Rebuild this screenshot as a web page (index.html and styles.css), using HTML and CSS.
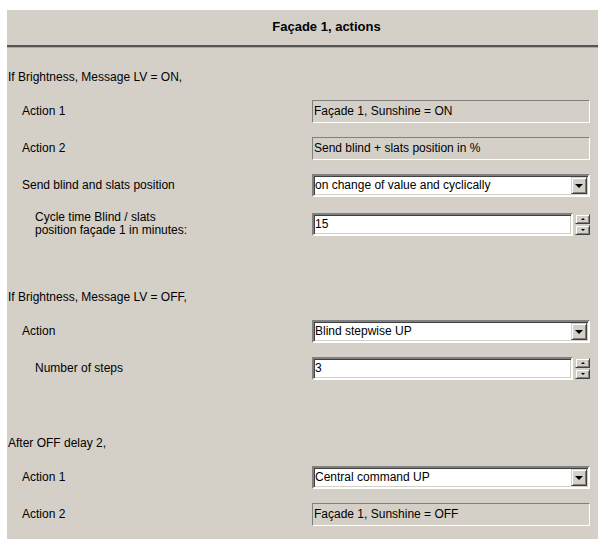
FILE: index.html
```html
<!DOCTYPE html>
<html lang="en">
<head>
<meta charset="utf-8">
<title>Façade 1, actions</title>
<link rel="stylesheet" href="styles.css">
</head>
<body>
<div class="panel">
  <div class="panel-header"><span class="panel-title">Façade 1, actions</span></div>

  <section class="group group-first">
    <div class="group-heading">If Brightness, Message LV = ON,</div>
    <div class="row">
      <div class="label">Action 1</div>
      <div class="field field-readonly">Façade 1, Sunshine = ON</div>
    </div>
    <div class="row">
      <div class="label">Action 2</div>
      <div class="field field-readonly">Send blind + slats position in %</div>
    </div>
    <div class="row">
      <div class="label">Send blind and slats position</div>
      <div class="field field-select">
        <span class="field-text">on change of value and cyclically</span>
        <span class="drop-btn"><span class="arrow-down"></span></span>
      </div>
    </div>
    <div class="row">
      <div class="label label-sub">Cycle time Blind / slats<br>position façade 1 in minutes:</div>
      <div class="spin">
        <div class="field spin-input">15</div>
        <div class="spin-btns">
          <span class="spin-btn"><span class="arrow-up-sm"></span></span>
          <span class="spin-btn"><span class="arrow-down-sm"></span></span>
        </div>
      </div>
    </div>
  </section>

  <section class="group">
    <div class="group-heading">If Brightness, Message LV = OFF,</div>
    <div class="row">
      <div class="label">Action</div>
      <div class="field field-select">
        <span class="field-text">Blind stepwise UP</span>
        <span class="drop-btn"><span class="arrow-down"></span></span>
      </div>
    </div>
    <div class="row">
      <div class="label label-sub">Number of steps</div>
      <div class="spin">
        <div class="field spin-input">3</div>
        <div class="spin-btns">
          <span class="spin-btn"><span class="arrow-up-sm"></span></span>
          <span class="spin-btn"><span class="arrow-down-sm"></span></span>
        </div>
      </div>
    </div>
  </section>

  <section class="group">
    <div class="group-heading">After OFF delay 2,</div>
    <div class="row">
      <div class="label">Action 1</div>
      <div class="field field-select">
        <span class="field-text">Central command UP</span>
        <span class="drop-btn"><span class="arrow-down"></span></span>
      </div>
    </div>
    <div class="row">
      <div class="label">Action 2</div>
      <div class="field field-readonly">Façade 1, Sunshine = OFF</div>
    </div>
  </section>
</div>
</body>
</html>
```

FILE: styles.css
```css
* { box-sizing: border-box; }

html, body {
  margin: 0;
  background: #ffffff;
}

body {
  padding: 10px 0 0 7px;
  font-family: "Liberation Sans", Arial, sans-serif;
  font-size: 12px;
  color: #000;
}

.panel {
  background: #d4d0c8;
  min-height: 529px;
  padding-bottom: 8px;
}

/* title bar with its etched divider */
.panel-header {
  height: 37px;
  display: flex;
  align-items: center;
  justify-content: center;
  padding-left: 48px;
  border-bottom: 2px solid #555555;
  box-shadow: 0 1px 0 #a8a8a8;
}

.panel-title {
  font-weight: bold;
  font-size: 13px;
  padding-bottom: 2px;
}

.group {
  display: flex;
  flex-direction: column;
  gap: 14px;
  margin-top: 56px;
}

.group-first { margin-top: 23px; }

.group-heading {
  height: 14px;
  line-height: 14px;
  padding-left: 1px;
  margin-bottom: 2px;
}

.row {
  display: grid;
  grid-template-columns: 1fr 278px;
  align-items: center;
  height: 23px;
  padding-right: 8px;
}

.label {
  padding-left: 15px;
  line-height: 13px;
}

.label-sub { padding-left: 28px; }

/* classic sunken edit border */
.field {
  height: 23px;
  border: 2px solid;
  border-color: #808080 #ffffff #ffffff #808080;
  box-shadow: inset 1px 1px 0 #404040, inset -1px -1px 0 #d4d0c8;
  background: #fff;
  padding-left: 1px;
  line-height: 19px;
  white-space: nowrap;
  overflow: hidden;
}

.field-readonly {
  background: #d4d0c8;
  border-width: 1px;
  box-shadow: none;
  line-height: 20px;
  padding-left: 1px;
}

.field-select {
  display: flex;
  align-items: center;
  padding-right: 1px;
}

.field-text { flex: 1; }

/* raised push buttons */
.drop-btn,
.spin-btn {
  display: flex;
  align-items: center;
  justify-content: center;
  background: #d4d0c8;
  border: 1px solid;
  border-color: #d4d0c8 #404040 #404040 #d4d0c8;
  box-shadow: inset 1px 1px 0 #ffffff, inset -1px -1px 0 #808080;
}

.drop-btn {
  width: 16px;
  height: 17px;
}

.arrow-down {
  width: 0;
  height: 0;
  border-left: 4px solid transparent;
  border-right: 4px solid transparent;
  border-top: 4px solid #000;
  margin-top: 1px;
}

.spin {
  display: flex;
  gap: 2px;
  height: 23px;
}

.spin-input {
  flex: 1;
}

.spin-btns {
  width: 15px;
  display: flex;
  flex-direction: column;
  gap: 1px;
  padding: 1px 0;
}

.spin-btn {
  flex: 1;
}

.arrow-up-sm,
.arrow-down-sm {
  width: 0;
  height: 0;
  border-left: 2px solid transparent;
  border-right: 2px solid transparent;
}

.arrow-up-sm { border-bottom: 2px solid #000; }
.arrow-down-sm { border-top: 2px solid #000; }
```
